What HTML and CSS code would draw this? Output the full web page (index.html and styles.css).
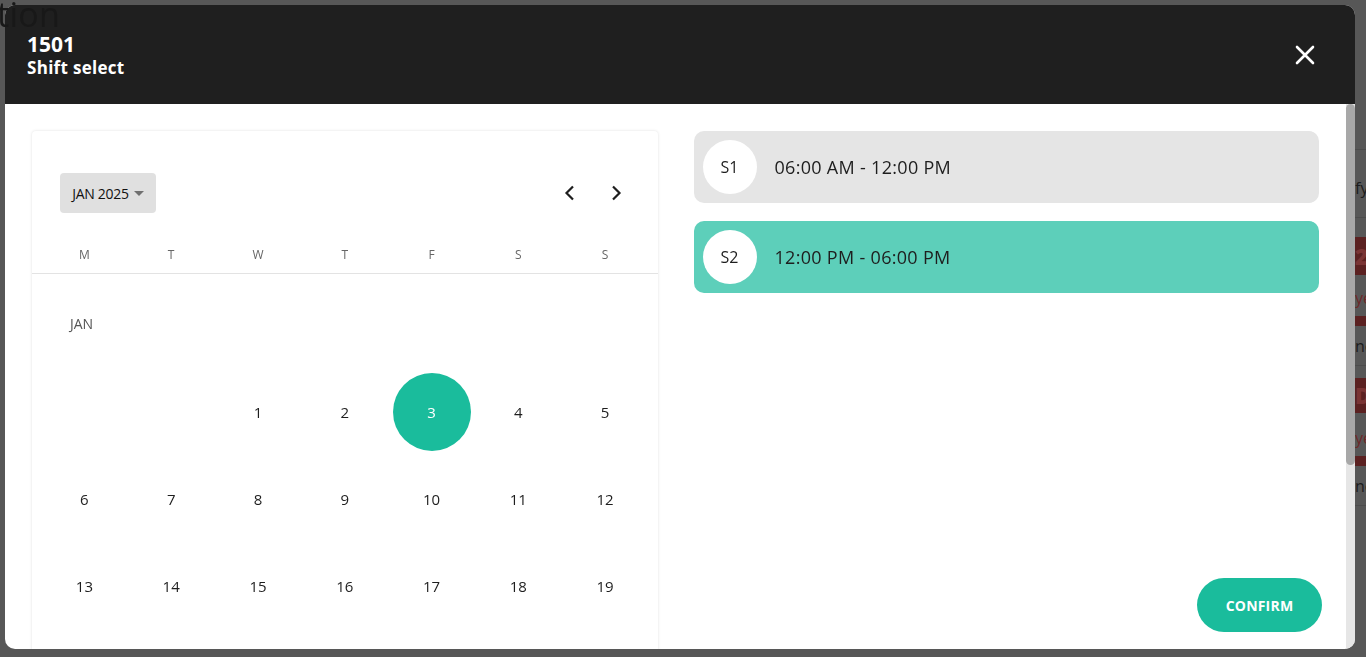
FILE: index.html
```html
<!DOCTYPE html>
<html lang="en">
<head>
<meta charset="utf-8">
<title>Shift select</title>
<link rel="stylesheet" href="styles.css">
</head>
<body>
<div class="backdrop">
  <div class="bg-title">tion</div>
  <div class="bg-right">
    <div class="bg-gap g1"></div>
    <div class="bg-row bg-first">fy</div>
    <div class="bg-space s1"></div>
    <div class="bg-block b1"><b>2</b></div>
    <div class="bg-row bg-redtext">ye</div>
    <div class="bg-stripe"></div>
    <div class="bg-row bg-text bg-lined">ne</div>
    <div class="bg-space s2"></div>
    <div class="bg-block b2"><b>D</b></div>
    <div class="bg-row bg-redtext r2">ye</div>
    <div class="bg-stripe"></div>
    <div class="bg-row bg-text bg-lined">ne</div>
  </div>
</div>

<div class="modal">
  <header class="modal-header">
    <div class="titles">
      <div class="title">1501</div>
      <div class="subtitle">Shift select</div>
    </div>
    <button class="close" aria-label="Close">
      <svg width="20" height="20" viewBox="0 0 20 20"><path d="M2 2 L18 18 M18 2 L2 18" stroke="#fff" stroke-width="2.6" stroke-linecap="round"/></svg>
    </button>
  </header>

  <div class="modal-main">
    <div class="modal-body">
      <section class="calendar">
        <div class="cal-head">
          <button class="month-btn">JAN 2025 <span class="caret"></span></button>
          <div class="nav">
            <button class="nav-btn" aria-label="Previous">
              <svg width="12" height="16" viewBox="0 0 12 16"><path d="M9 1.5 L2.5 8 L9 14.5" fill="none" stroke="#1e1e1e" stroke-width="2.2"/></svg>
            </button>
            <button class="nav-btn" aria-label="Next">
              <svg width="12" height="16" viewBox="0 0 12 16"><path d="M3 1.5 L9.5 8 L3 14.5" fill="none" stroke="#1e1e1e" stroke-width="2.2"/></svg>
            </button>
          </div>
        </div>
        <div class="weekdays">
          <span>M</span><span>T</span><span>W</span><span>T</span><span>F</span><span>S</span><span>S</span>
        </div>
        <div class="month-label">JAN</div>
        <div class="days">
          <span></span><span></span>
          <span class="day">1</span><span class="day">2</span><span class="day selected"><b>3</b></span><span class="day">4</span><span class="day">5</span>
          <span class="day">6</span><span class="day">7</span><span class="day">8</span><span class="day">9</span><span class="day">10</span><span class="day">11</span><span class="day">12</span>
          <span class="day">13</span><span class="day">14</span><span class="day">15</span><span class="day">16</span><span class="day">17</span><span class="day">18</span><span class="day">19</span>
          <span class="day">20</span><span class="day">21</span><span class="day">22</span><span class="day">23</span><span class="day">24</span><span class="day">25</span><span class="day">26</span>
          <span class="day">27</span><span class="day">28</span><span class="day">29</span><span class="day">30</span><span class="day">31</span><span></span><span></span>
        </div>
      </section>

      <section class="shifts">
        <div class="shift">
          <span class="badge">S1</span>
          <span class="time">06:00 AM - 12:00 PM</span>
        </div>
        <div class="shift active">
          <span class="badge">S2</span>
          <span class="time">12:00 PM - 06:00 PM</span>
        </div>
      </section>
    </div>
    <div class="scrollbar"><div class="thumb"></div></div>
  </div>

  <button class="confirm">CONFIRM</button>
</div>
</body>
</html>
```

FILE: styles.css
```css
* { box-sizing: border-box; }

html, body {
  margin: 0;
  height: 100%;
}

body {
  background: #575757;
  font-family: "Open Sans", "Liberation Sans", sans-serif;
  color: #1e1e1e;
  overflow: hidden;
}

button {
  font-family: inherit;
  border: 0;
  background: none;
  padding: 0;
  cursor: pointer;
}

/* dimmed page behind the modal */
.backdrop {
  height: 100%;
  display: flex;
  justify-content: space-between;
}

.bg-title {
  font-size: 34px;
  line-height: 34px;
  color: #181818;
  margin-left: -3px;
  margin-top: -3px;
  height: 40px;
  position: relative;
  z-index: 20;
  letter-spacing: 0.3px;
}

.bg-right {
  width: 11px;
  display: flex;
  flex-direction: column;
  overflow: hidden;
}

.bg-gap.g1 { height: 150px; flex: none; border-bottom: 1px solid #4c4c4c; }

.bg-space { flex: none; }
.bg-space.s1 { height: 19px; }
.bg-space.s2 { height: 12px; }

.bg-row {
  flex: none;
  height: 40px;
  font-size: 16px;
  line-height: 40px;
  color: #1c1c1c;
  white-space: nowrap;
}

.bg-first {
  height: 68px;
  line-height: 76px;
  border-bottom: 1px solid #4c4c4c;
}

.bg-lined { border-bottom: 1px solid #4c4c4c; }

.bg-redtext { color: #6e2828; height: 41px; line-height: 46px; }
.bg-redtext.r2 { height: 43px; line-height: 50px; }

.bg-block {
  flex: none;
  height: 38px;
  background: #5b2121;
  color: #7a3434;
  font-size: 22px;
  line-height: 38px;
  font-weight: 700;
  overflow: hidden;
}

.bg-block.b2 { height: 35px; line-height: 35px; }

.bg-stripe {
  flex: none;
  height: 10px;
  background: #5b2121;
}

/* modal */
.modal {
  position: fixed;
  left: 5px;
  top: 5px;
  width: 1350px;
  height: 644px;
  border-radius: 10px;
  overflow: hidden;
  background: #fff;
  display: flex;
  flex-direction: column;
  z-index: 10;
}

.modal-header {
  height: 99px;
  flex: none;
  background: #1f1f1f;
  color: #fff;
  display: flex;
  align-items: center;
  justify-content: space-between;
  padding: 0 40px 0 22px;
}

.title {
  font-size: 21px;
  font-weight: 700;
  line-height: 26px;
}

.subtitle {
  font-size: 17px;
  font-weight: 700;
  line-height: 22px;
  letter-spacing: 0.3px;
}

.close {
  width: 20px;
  height: 20px;
  display: flex;
}

.modal-main {
  flex: 1;
  min-height: 0;
  display: flex;
}

.modal-body {
  flex: 1;
  overflow: hidden;
  padding: 27px;
  display: grid;
  grid-template-columns: 1fr 1fr;
  column-gap: 36px;
  align-items: start;
}

.scrollbar {
  width: 9px;
  flex: none;
  background: #e6e6e6;
}

.thumb {
  height: 361px;
  background: #a8a8a8;
  border-radius: 5px;
}

/* calendar */
.calendar {
  background: #fff;
  border-radius: 4px;
  box-shadow: 0 0 3px rgba(0, 0, 0, 0.13);
  padding-bottom: 97px;
}

.cal-head {
  display: flex;
  justify-content: space-between;
  align-items: center;
  padding: 42px 32px 0 28px;
}

.month-btn {
  height: 40px;
  width: 96px;
  background: #e0e0e0;
  border-radius: 4px;
  font-size: 14px;
  color: #111;
  display: flex;
  align-items: center;
  justify-content: center;
  gap: 5px;
  letter-spacing: -0.3px;
}

.caret {
  width: 0;
  height: 0;
  border-left: 5px solid transparent;
  border-right: 5px solid transparent;
  border-top: 5px solid #707070;
}

.nav {
  display: flex;
  gap: 26px;
}

.nav-btn {
  width: 20px;
  height: 20px;
  display: flex;
  align-items: center;
  justify-content: center;
}

.weekdays {
  margin-top: 23px;
  height: 38px;
  border-bottom: 1px solid #e3e3e3;
  display: grid;
  grid-template-columns: repeat(7, 1fr);
  padding: 0 9px;
  align-items: center;
  font-size: 12px;
  color: #666;
  text-align: center;
}

.month-label {
  height: 94px;
  padding-left: 38px;
  padding-top: 4px;
  display: flex;
  align-items: center;
  font-size: 14px;
  color: #555;
}

.days {
  display: grid;
  grid-template-columns: repeat(7, 1fr);
  grid-auto-rows: 87px;
  padding: 0 9px;
}

.day {
  display: flex;
  align-items: center;
  justify-content: center;
  font-size: 15px;
  color: #1e1e1e;
}

.day.selected b {
  width: 78px;
  height: 78px;
  border-radius: 50%;
  background: #1abc9c;
  color: #fff;
  font-weight: 400;
  display: flex;
  align-items: center;
  justify-content: center;
}

/* shifts */
.shifts {
  display: flex;
  flex-direction: column;
  gap: 18px;
}

.shift {
  height: 72px;
  border-radius: 10px;
  background: #e5e5e5;
  display: flex;
  align-items: center;
  padding-left: 9px;
  gap: 18px;
}

.shift.active { background: #5dcfba; }

.badge {
  width: 54px;
  height: 54px;
  border-radius: 50%;
  background: #fff;
  display: flex;
  align-items: center;
  justify-content: center;
  font-size: 16px;
  color: #1e1e1e;
}

.time {
  font-size: 18px;
  letter-spacing: 0.3px;
  color: #1e1e1e;
}

.confirm {
  position: absolute;
  right: 33px;
  bottom: 17px;
  width: 125px;
  height: 54px;
  border-radius: 27px;
  background: #1abc9c;
  color: #fff;
  font-size: 14px;
  font-weight: 700;
  letter-spacing: 0.2px;
}
```
